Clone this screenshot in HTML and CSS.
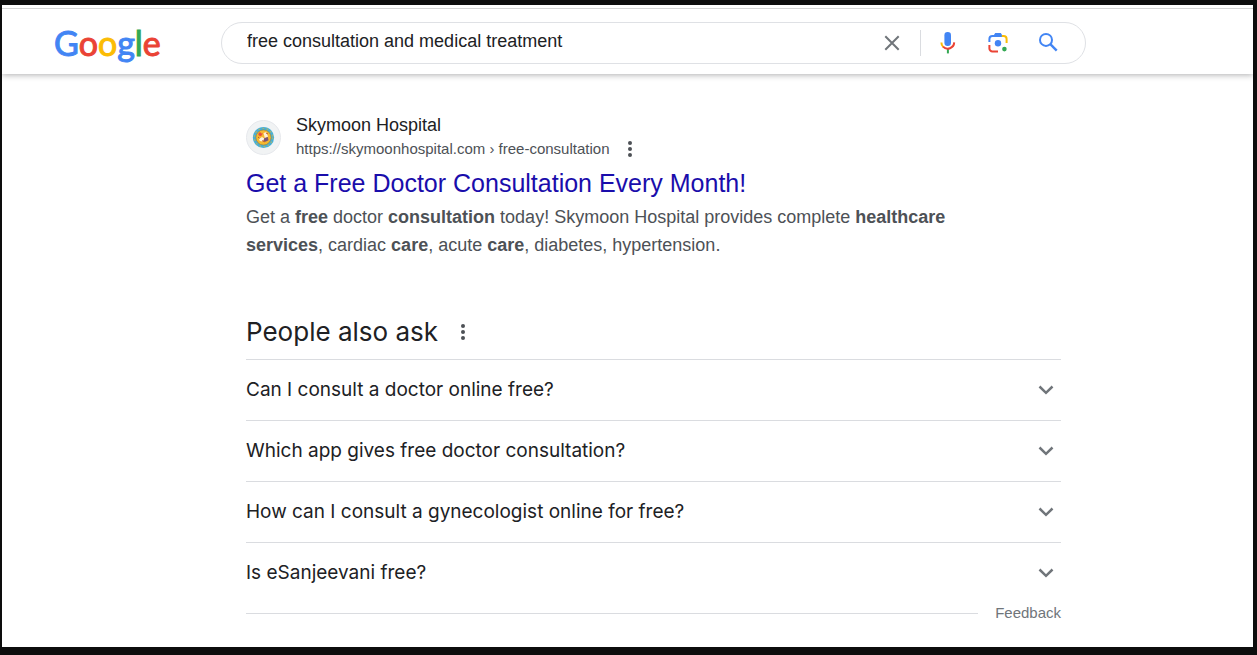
FILE: index.html
```html
<!DOCTYPE html>
<html lang="en">
<head>
<meta charset="utf-8">
<meta name="viewport" content="width=device-width, initial-scale=1">
<title>free consultation and medical treatment - Google Search</title>
<link rel="stylesheet" href="styles.css">
</head>
<body>
<div class="page">
  <header class="header">
    <a class="logo" href="#" aria-label="Google">
      <svg width="108" height="46" viewBox="0 0 108 46">
        <text class="logo-text" x="0" y="36"><tspan fill="#4285f4" stroke="#4285f4">G</tspan><tspan fill="#ea4335" stroke="#ea4335">o</tspan><tspan fill="#fbbc05" stroke="#fbbc05">o</tspan><tspan fill="#4285f4" stroke="#4285f4">g</tspan><tspan fill="#34a853" stroke="#34a853">l</tspan><tspan fill="#ea4335" stroke="#ea4335">e</tspan></text>
      </svg>
    </a>
    <form class="search" role="search">
      <input class="search-input" type="text" aria-label="Search" value="free consultation and medical treatment">
      <button class="icon-button clear" type="button" aria-label="Clear">
        <svg width="24" height="24" viewBox="0 0 24 24"><path d="M5.3 5.3 18.7 18.7M18.7 5.3 5.3 18.7" stroke="#70757a" stroke-width="2" fill="none"/></svg>
      </button>
      <span class="divider"></span>
      <button class="icon-button" type="button" aria-label="Search by voice">
        <svg width="24" height="24" viewBox="0 0 24 24">
          <rect x="8.4" y="1" width="6.6" height="14" rx="3.2" fill="#4285f4"/>
          <path d="M10.9 18h2v4.4h-2z" fill="#34a853"/>
          <path d="M5.4 11.4A6.4 6.4 0 0 0 7.2 15.9" stroke="#fbbc04" stroke-width="2" fill="none"/>
          <path d="M7 15.6A6.5 6.5 0 0 0 18.2 11.4" stroke="#ea4335" stroke-width="2" fill="none"/>
        </svg>
      </button>
      <button class="icon-button" type="button" aria-label="Search by image">
        <svg width="24" height="24" viewBox="0 0 24 24" fill="none" stroke-width="2">
          <path d="M3.4 11V8A3 3 0 0 1 6.4 5H16" stroke="#4285f4"/>
          <path d="M7.3 5 9.2 2h5.6L16.7 5z" fill="#4285f4"/>
          <path d="M15.8 5h1.8A3 3 0 0 1 20.6 8v4" stroke="#fbbc04"/>
          <path d="M3.4 14v3.4a3 3 0 0 0 3 3H12" stroke="#ea4335"/>
          <circle cx="12" cy="12.3" r="3.2" fill="#4285f4"/>
          <circle cx="18.4" cy="18.1" r="2.3" fill="#34a853"/>
        </svg>
      </button>
      <button class="icon-button" type="submit" aria-label="Google Search">
        <svg width="24" height="24" viewBox="0 0 24 24" fill="none" stroke="#4285f4" stroke-width="2">
          <circle cx="10" cy="8.9" r="6"/><path d="m14.3 13.2 6.4 6.4" stroke-width="2.4"/>
        </svg>
      </button>
    </form>
  </header>
  <main class="results">
    <article class="result">
      <div class="source">
        <svg class="favicon" width="35" height="35" viewBox="0 0 35 35">
          <circle cx="17.5" cy="17.5" r="17" fill="#f1f3f4" stroke="#e6e8ec"/>
          <circle cx="17.5" cy="17.5" r="10.6" fill="#45afd9"/>
          <circle cx="17.5" cy="17.5" r="9.2" fill="none" stroke="#a9b56d" stroke-width="1.2" stroke-dasharray="1.8 2.4"/>
          <circle cx="17.5" cy="17.5" r="7.6" fill="#f5b82e" stroke="#9b8540" stroke-width=".7"/>
          <path d="M12.5 13.5 14 12l1.5 1.5 1.2-.6-.7 2.4-1.8 1-1.8-1.3z" fill="#e9503a"/>
          <path d="m17.5 13 3-1 1.5 4.5-3 2z" fill="#fff0d5"/>
          <path d="m13 19 3-2 2.3 1.6-1.5 2.8-3-.3z" fill="#fff3e1"/>
          <path d="m18.4 18 3.4-1 .7 3.2-3 1.6-2-1z" fill="#7b5374"/>
          <path d="m12 17 1.4 1.2M20 13l2 1M16 20.7l3 1.2" stroke="#bd582c" fill="none"/>
        </svg>
        <div class="source-text">
          <span class="site">Skymoon Hospital</span>
          <div class="url-row">
            <cite class="url">https://skymoonhospital.com › free-consultation</cite>
            <button class="dots" type="button" aria-label="About this result"><svg width="6" height="18" viewBox="0 0 6 18" fill="#4d5156"><circle cx="3" cy="3" r="2"/><circle cx="3" cy="9" r="2"/><circle cx="3" cy="15" r="2"/></svg></button>
          </div>
        </div>
      </div>
      <h3 class="title"><a href="#">Get a Free Doctor Consultation Every Month!</a></h3>
      <p class="snippet">Get a <b>free</b> doctor <b>consultation</b> today! Skymoon Hospital provides complete <b>healthcare services</b>, cardiac <b>care</b>, acute <b>care</b>, diabetes, hypertension.</p>
    </article>
    <section class="related">
      <div class="related-head">
        <h2 class="related-title">People also ask</h2>
        <button class="dots" type="button" aria-label="About these results"><svg width="6" height="18" viewBox="0 0 6 18" fill="#4d5156"><circle cx="3" cy="3" r="2"/><circle cx="3" cy="9" r="2"/><circle cx="3" cy="15" r="2"/></svg></button>
      </div>
      <button class="question" type="button"><span>Can I consult a doctor online free?</span><svg class="chevron" width="16" height="10" viewBox="0 0 16 10"><path d="m1.5 1.5 6.5 6.3 6.5-6.3"/></svg></button>
      <button class="question" type="button"><span>Which app gives free doctor consultation?</span><svg class="chevron" width="16" height="10" viewBox="0 0 16 10"><path d="m1.5 1.5 6.5 6.3 6.5-6.3"/></svg></button>
      <button class="question" type="button"><span>How can I consult a gynecologist online for free?</span><svg class="chevron" width="16" height="10" viewBox="0 0 16 10"><path d="m1.5 1.5 6.5 6.3 6.5-6.3"/></svg></button>
      <button class="question" type="button"><span>Is eSanjeevani free?</span><svg class="chevron" width="16" height="10" viewBox="0 0 16 10"><path d="m1.5 1.5 6.5 6.3 6.5-6.3"/></svg></button>
      <div class="feedback-row"><a class="feedback" href="#">Feedback</a></div>
    </section>
  </main>
</div>
</body>
</html>
```
FILE: styles.css
```css
* {
  box-sizing: border-box;
}

body {
  margin: 0;
  background: #fff;
  color: #202124;
  font-family: "Liberation Sans", Arial, sans-serif;
}

button {
  margin: 0;
  padding: 0;
  border: 0;
  background: none;
  cursor: pointer;
}

svg {
  display: block;
}

.page {
  min-height: 100vh;
  padding-top: 3px;
  border: solid #0d0d0d;
  border-width: 5px 4px 8px 2px;
}

.header {
  display: flex;
  align-items: center;
  gap: 59px;
  padding: 11px 20px 8px 52px;
  border-top: 1px solid #d5d5d5;
  box-shadow: 0 1px 6px rgba(32, 33, 36, 0.36);
  clip-path: inset(0 0 -12px 0);
}

.logo {
  flex: none;
}

.logo-text {
  font-family: Lato, sans-serif;
  font-size: 34px;
  stroke-width: 1px;
}

.search {
  display: flex;
  flex: 1;
  align-items: center;
  max-width: 865px;
  height: 42px;
  padding: 0 25px;
  border: 1px solid #dfe1e5;
  border-radius: 24px;
}

.search-input {
  flex: 1;
  min-width: 0;
  padding: 0 0 4px;
  border: 0;
  outline: 0;
  background: none;
  color: #202124;
  font: 18px "Liberation Sans", Arial, sans-serif;
}

.icon-button {
  flex: none;
  margin-left: 26px;
}

.clear {
  margin: 0 16px 0 0;
}

.divider {
  width: 1px;
  height: 26px;
  margin-right: -11px;
  background: #dadce0;
}

.results {
  max-width: 1059px;
  padding: 39px 0 22px 244px;
}

.source {
  display: flex;
  align-items: center;
  gap: 15px;
}

.site {
  display: block;
  font-size: 18px;
  line-height: 24px;
}

.url-row {
  display: flex;
  align-items: center;
  gap: 18px;
}

.url {
  color: #4d5156;
  font-size: 15px;
  font-style: normal;
  line-height: 24px;
}

.title {
  margin: 6px 0 0;
  font-size: 25px;
  font-weight: 400;
  line-height: 32px;
}

.title a {
  color: #1a0dab;
  text-decoration: none;
}

.snippet {
  max-width: 700px;
  margin: 4px 0 0;
  color: #4d5156;
  font-size: 18px;
  line-height: 28px;
}

.related {
  margin-top: 54px;
}

.related-head {
  display: flex;
  align-items: center;
  gap: 22px;
  padding-bottom: 8px;
}

.related-title {
  margin: 0;
  font: 26px/38px Inter, sans-serif;
}

.question {
  display: flex;
  align-items: center;
  justify-content: space-between;
  width: 100%;
  height: 61px;
  padding-right: 7px;
  border-top: 1px solid #dadce0;
  color: #202124;
  font: 19px/28px Inter, sans-serif;
  text-align: left;
}

.chevron {
  flex: none;
  fill: none;
  stroke: #70757a;
  stroke-width: 2.5;
}

.feedback-row {
  display: flex;
  align-items: center;
  gap: 17px;
}

.feedback-row::before {
  flex: 1;
  height: 1px;
  background: #dadce0;
  content: "";
}

.feedback {
  color: #70757a;
  font-size: 15px;
  line-height: 20px;
  text-decoration: none;
}
```
